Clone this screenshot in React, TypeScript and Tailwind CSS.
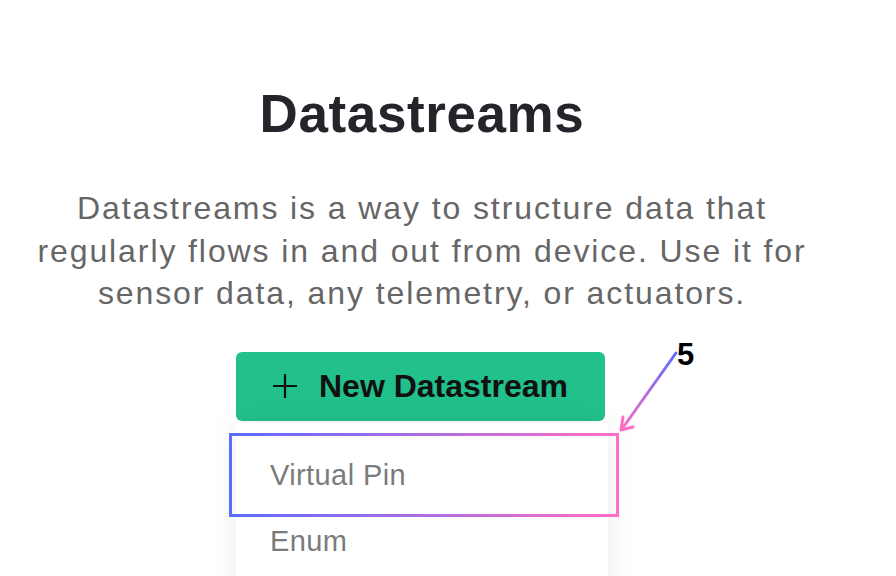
const sans = "font-['Liberation_Sans',Arial,sans-serif]";

function Annotation() {
  return (
    <>
      <svg
        aria-hidden="true"
        className="pointer-events-none absolute inset-0"
        width={896}
        height={576}
      >
        <defs>
          <linearGradient id="boxGrad" x1="229" y1="0" x2="619" y2="0" gradientUnits="userSpaceOnUse">
            <stop offset="0" stopColor="#5b6bff" />
            <stop offset="1" stopColor="#ff6ec4" />
          </linearGradient>
          <linearGradient id="arrowGrad" x1="676" y1="353" x2="621" y2="430" gradientUnits="userSpaceOnUse">
            <stop offset="0" stopColor="#5b6bff" />
            <stop offset="1" stopColor="#ff6ec4" />
          </linearGradient>
        </defs>
        <rect x={230.5} y={434.5} width={387} height={81} fill="none" stroke="url(#boxGrad)" strokeWidth={3} />
        <path d="M676 353 L622 429" stroke="url(#arrowGrad)" strokeWidth={3} strokeLinecap="round" fill="none" />
        <path d="M623 417 L621 430 L633 427" stroke="#ff6ec4" strokeWidth={3} strokeLinecap="round" strokeLinejoin="round" fill="none" />
      </svg>
      <span className={`absolute left-[677px] top-[339px] text-[31px] font-bold leading-none text-black ${sans}`}>
        5
      </span>
    </>
  );
}

export default function App() {
  return (
    <div className={`relative h-[576px] w-[896px] overflow-hidden bg-white ${sans}`}>
      <div className="flex w-[844px] flex-col items-center text-center">
        <h1 className="pt-[87px] text-[53px] font-bold leading-none tracking-[0.6px] text-[#24252b]">
          Datastreams
        </h1>
        <p className="mt-[47px] whitespace-nowrap text-[32px] leading-[42.5px] tracking-[1.9px] text-[#666]">
          Datastreams is a way to structure data that
          <br />
          regularly flows in and out from device. Use it for
          <br />
          sensor data, any telemetry, or actuators.
        </p>

        <div className="mt-[37px] flex w-[372px] flex-col">
          <button className="flex h-[69px] w-[369px] items-center justify-center gap-[22px] rounded-[6px] bg-[#22c08a] text-[32px] font-bold text-[#111]">
            <svg width={24} height={24} viewBox="0 0 24 24" aria-hidden="true">
              <path d="M12 0V24M0 12H24" stroke="#111" strokeWidth={2.2} />
            </svg>
            New Datastream
          </button>
          <div className="mt-[2px] flex h-[200px] flex-col bg-white pt-[2px] shadow-[0_0_28px_rgba(0,0,0,0.08)]">
            <div className="flex h-[88px] items-center pl-[34px] pt-[14px] text-[29px] tracking-[0.4px] text-[#7b7b7b]">
              Virtual Pin
            </div>
            <div className="flex h-[58px] items-center pl-[34px] text-[29px] tracking-[0.4px] text-[#7b7b7b]">
              Enum
            </div>
          </div>
        </div>
      </div>
      <Annotation />
    </div>
  );
}
